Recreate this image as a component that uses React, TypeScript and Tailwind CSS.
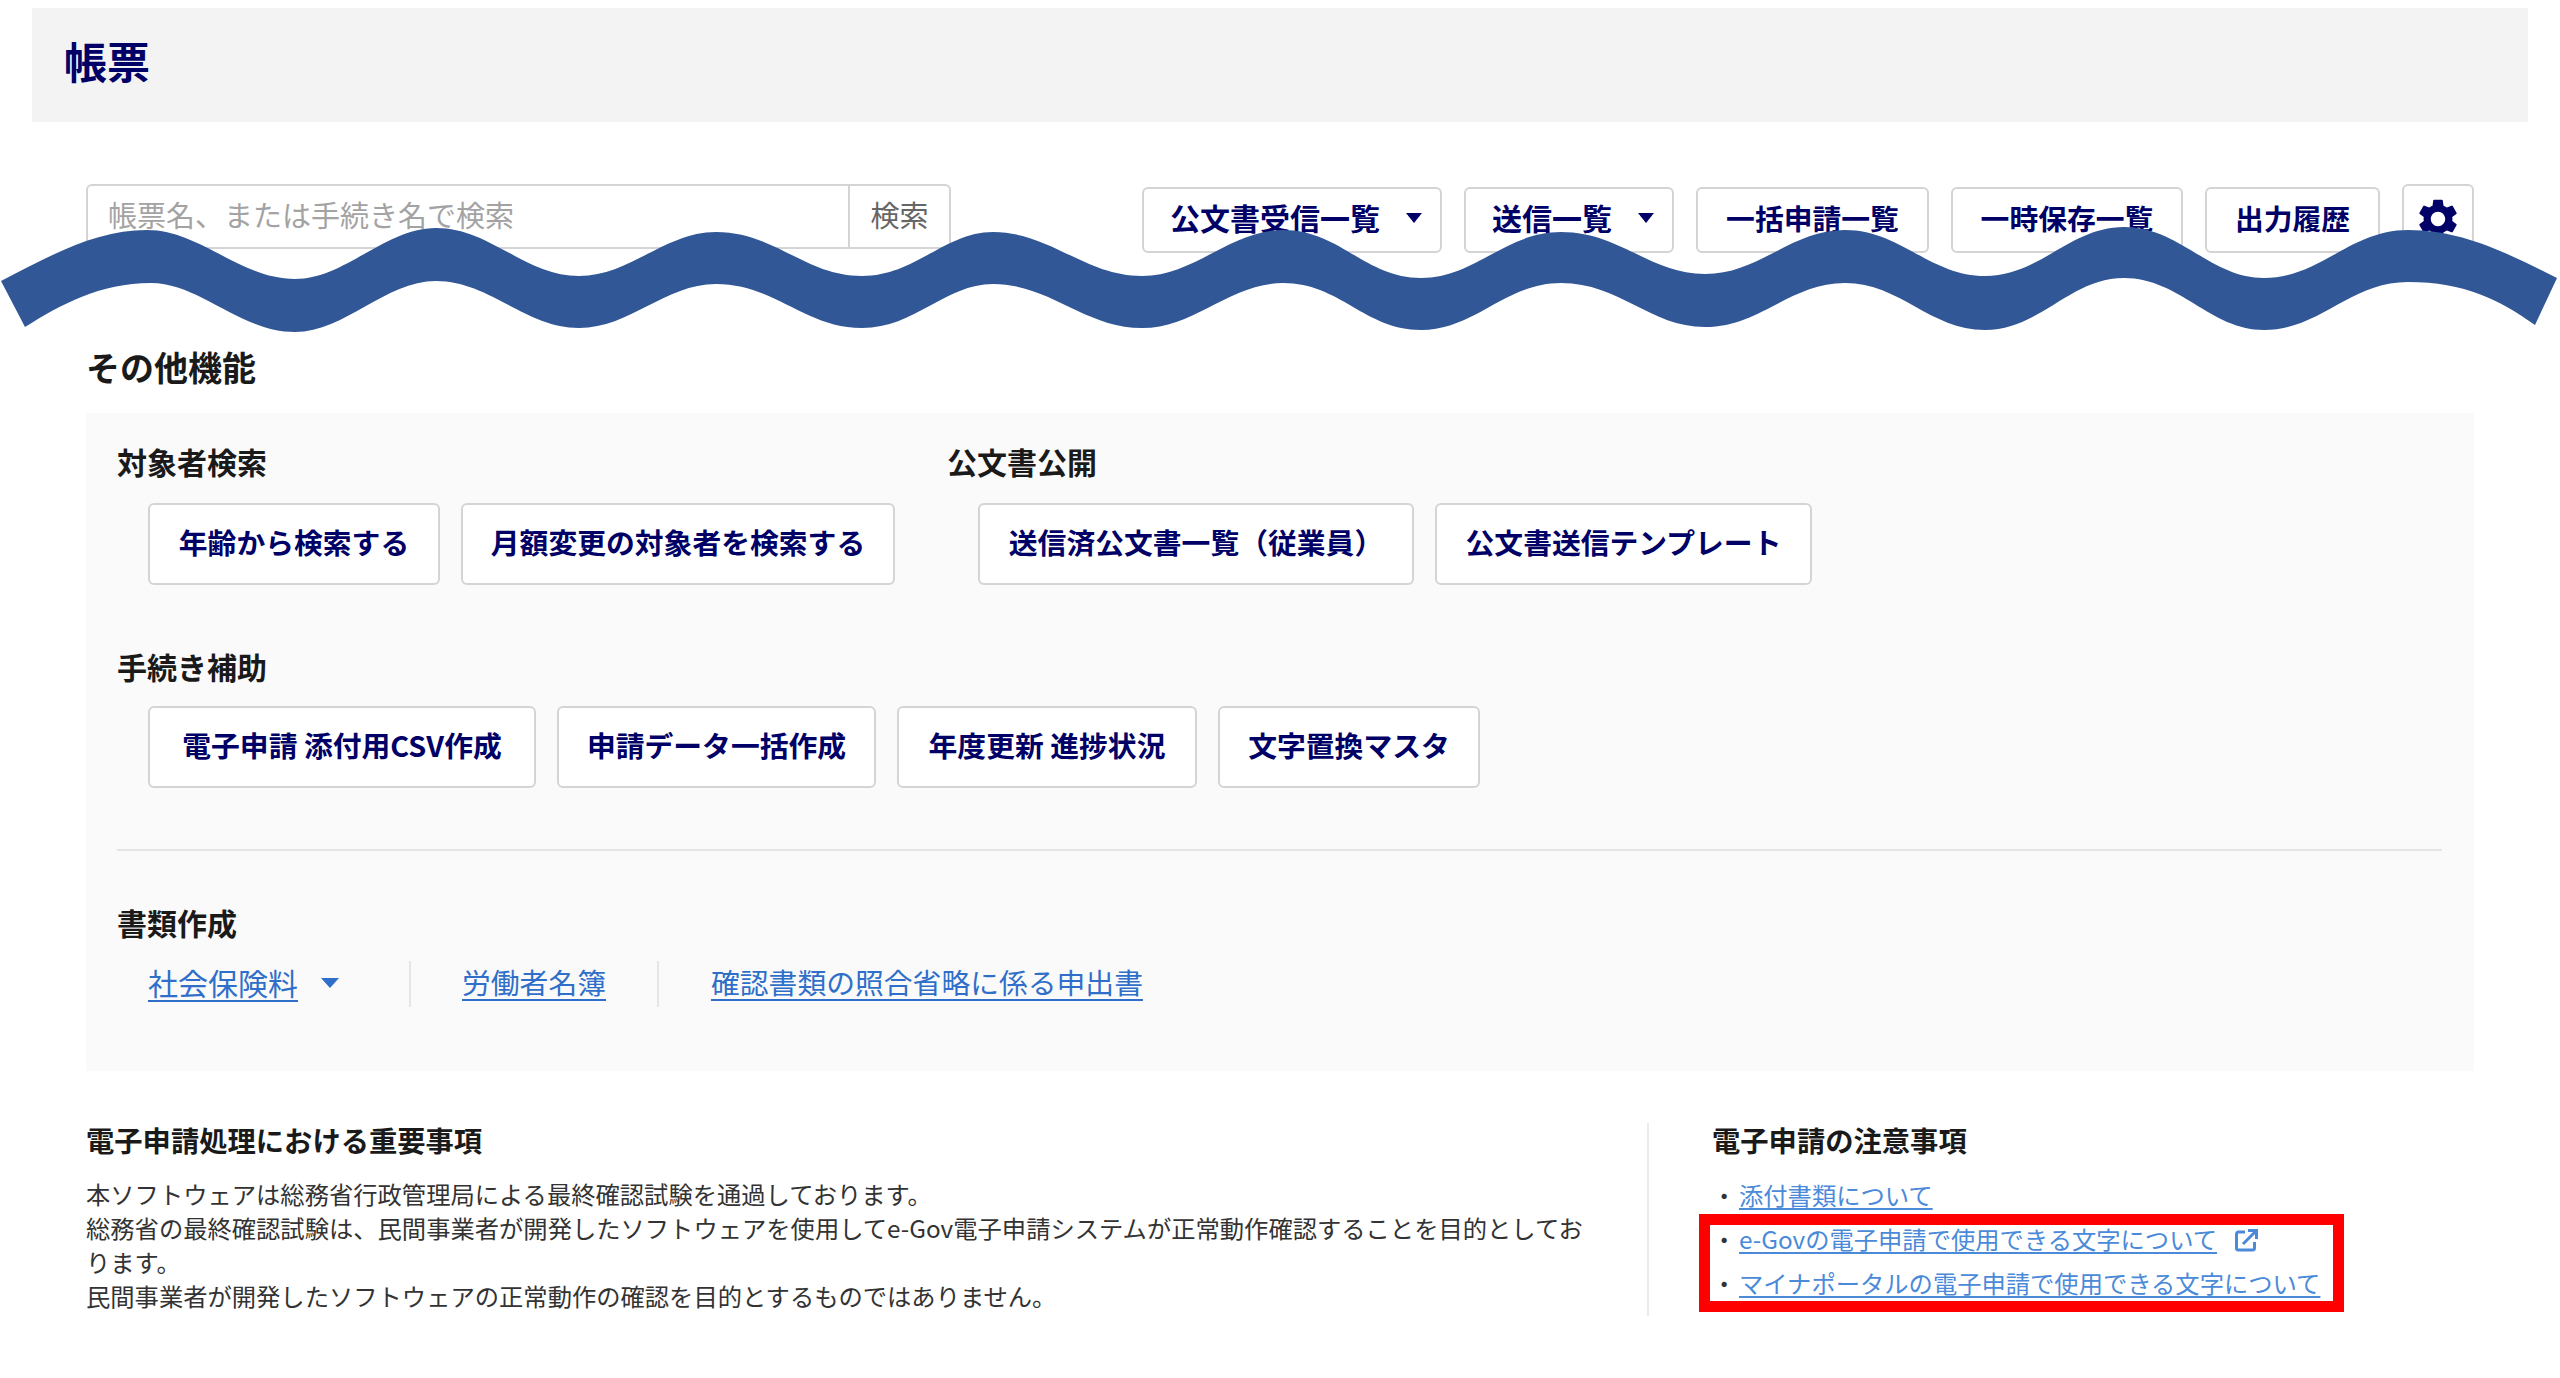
import React from "react";
import { MdSettings } from "react-icons/md";

const navy = "text-[#000066]";

function Btn({ children, className = "" }: { children: React.ReactNode; className?: string }) {
  return (
    <button className={`flex h-[82px] items-center justify-center rounded-[6px] border-2 border-[#d4d4d4] bg-white pb-[5px] text-[28.8px] font-bold ${navy} ${className}`}>
      {children}
    </button>
  );
}

function TopBtn({ children, w, caret }: { children: React.ReactNode; w: string; caret?: boolean }) {
  return (
    <button className={`flex h-[66px] items-center justify-center gap-[26px] rounded-[6px] border-2 border-[#d4d4d4] bg-white font-bold ${caret ? "pl-[8px] text-[30px]" : "text-[28.8px]"} ${navy} ${w}`}>
      <span className="pb-[5px]">{children}</span>
      {caret && <span className="mt-[-4px] h-0 w-0 border-x-[8px] border-t-[10px] border-x-transparent border-t-[#000066]" />}
    </button>
  );
}

function H({ children, className = "" }: { children: React.ReactNode; className?: string }) {
  return <h3 className={`pb-[2px] text-[30px] leading-[38px] font-bold text-[#1a1a1a] ${className}`}>{children}</h3>;
}

const wavePath =
  "M1 281 C60 250 100 230 147 230 C200 230 240 279 295 279 C345 279 385 228 436 228 C490 228 525 276 579 276 C630 276 665 232 716 232 C775 232 805 276 862 276 C915 276 945 232 993 232 C1050 232 1085 276 1142 276 C1195 276 1230 230 1283 230 C1340 230 1365 278 1421 278 C1475 278 1505 232 1561 232 C1620 232 1650 274 1705 274 C1760 274 1790 230 1845 230 C1900 230 1930 276 1985 276 C2040 276 2070 227 2124 227 C2180 227 2210 278 2264 278 C2320 278 2350 230 2408 230 C2465 230 2510 255 2557 278 L2535 325 C2500 300 2465 282 2408 282 C2350 282 2320 330 2264 330 C2210 330 2180 278 2124 278 C2070 278 2040 330 1985 330 C1930 330 1900 283 1845 283 C1790 283 1760 327 1705 327 C1650 327 1620 283 1561 283 C1505 283 1475 330 1421 330 C1365 330 1340 283 1283 283 C1230 283 1195 328 1142 328 C1085 328 1050 284 993 284 C945 284 915 328 862 328 C805 328 775 284 716 284 C665 284 630 328 579 328 C525 328 490 281 436 281 C385 281 345 332 295 332 C240 332 200 283 151 283 C100 283 60 305 25 327 Z";

export default function App() {
  return (
    <div className="relative h-[1378px] w-[2560px] overflow-hidden bg-white pt-2 font-['Noto_Sans_CJK_JP','Noto_Sans',sans-serif]">
      <header className="mx-8 flex h-[114px] items-center bg-[#f3f3f3] pb-[10px] pl-[32px]">
        <h1 className={`text-[43px] font-bold ${navy}`}>帳票</h1>
      </header>

      <main className="px-[86px]">
        <div className="mt-[62px] flex h-[69px] items-start justify-between">
          <div className="flex h-[65px] w-[865px] overflow-hidden rounded-[6px] border-2 border-[#d4d4d4] bg-white text-[29px]">
            <div className="flex flex-1 items-center pb-[3px] pl-[20px] text-[#a3a3a3]">帳票名、または手続き名で検索</div>
            <div className="flex w-[101px] items-center justify-center border-l-2 border-[#d4d4d4] pb-[3px] text-[#666666]">検索</div>
          </div>
          <div className="flex items-start gap-[22px]">
            <div className="mt-[3px] flex gap-[22px]">
              <TopBtn w="w-[300px]" caret>公文書受信一覧</TopBtn>
              <TopBtn w="w-[210px]" caret>送信一覧</TopBtn>
              <TopBtn w="w-[233px]">一括申請一覧</TopBtn>
              <TopBtn w="w-[232px]">一時保存一覧</TopBtn>
              <TopBtn w="w-[175px]">出力履歴</TopBtn>
            </div>
            <button className="flex h-[69px] w-[72px] items-center justify-center rounded-[6px] border-2 border-[#d4d4d4] bg-white">
              <MdSettings className="h-[48px] w-[48px] text-[#000066]" />
            </button>
          </div>
        </div>

        <h2 className="mt-[95px] pb-[2px] text-[34px] leading-[38px] font-bold text-[#1a1a1a]">その他機能</h2>

        <section className="mt-[25px] h-[658px] bg-[#fafafa] pt-[29px] pr-[32px] pl-[31px]">
          <div className="flex">
            <div className="w-[830px]">
              <H>対象者検索</H>
              <div className="mt-[21px] ml-[31px] flex gap-[21px]">
                <Btn className="w-[292px]">年齢から検索する</Btn>
                <Btn className="w-[434px]">月額変更の対象者を検索する</Btn>
              </div>
            </div>
            <div>
              <H>公文書公開</H>
              <div className="mt-[21px] ml-[31px] flex gap-[21px]">
                <Btn className="w-[436px]">送信済公文書一覧（従業員）</Btn>
                <Btn className="w-[377px]">公文書送信テンプレート</Btn>
              </div>
            </div>
          </div>

          <H className="mt-[62px]">手続き補助</H>
          <div className="mt-[19px] ml-[31px] flex gap-[21px]">
            <Btn className="w-[388px]">電子申請 添付用CSV作成</Btn>
            <Btn className="w-[319px]">申請データ一括作成</Btn>
            <Btn className="w-[300px]">年度更新 進捗状況</Btn>
            <Btn className="w-[262px]">文字置換マスタ</Btn>
          </div>

          <div className="mt-[61px] h-[2px] bg-[#e5e5e5]" />

          <H className="mt-[52px]">書類作成</H>
          <div className="mt-[18px] ml-[31px] flex h-[46px] items-center text-[28.8px] text-[#2f6fc9]">
            <a className="pb-[4px] text-[30px] underline decoration-2 underline-offset-[5px]">社会保険料</a>
            <span className="mt-[-3px] ml-[23px] h-0 w-0 border-x-[9px] border-t-[10px] border-x-transparent border-t-[#2f6fc9]" />
            <span className="ml-[70px] h-full w-[2px] bg-[#e5e5e5]" />
            <a className="ml-[51px] pb-[4px] underline decoration-2 underline-offset-[5px]">労働者名簿</a>
            <span className="ml-[51px] h-full w-[2px] bg-[#e5e5e5]" />
            <a className="ml-[52px] pb-[4px] underline decoration-2 underline-offset-[5px]">確認書類の照合省略に係る申出書</a>
          </div>
        </section>

        <div className="mt-[52px] flex">
          <div className="h-[193px] w-[1563px] border-r-2 border-[#ebebeb]">
            <h3 className="text-[28.3px] leading-[33px] font-bold text-[#1a1a1a]">電子申請処理における重要事項</h3>
            <p className="mt-[21px] w-[1510px] text-[24.3px] leading-[34px] text-[#333333]">
              本ソフトウェアは総務省行政管理局による最終確認試験を通過しております。
              <br />
              総務省の最終確認試験は、民間事業者が開発したソフトウェアを使用してe-Gov電子申請システムが正常動作確認することを目的としております。
              <br />
              民間事業者が開発したソフトウェアの正常動作の確認を目的とするものではありません。
            </p>
          </div>
          <div className="pl-[63px]">
            <h3 className="text-[28.3px] leading-[33px] font-bold text-[#1a1a1a]">電子申請の注意事項</h3>
            <ul className="mt-[22px] flex flex-col gap-[10px] text-[24.3px] leading-[34px] text-[#4a8ad8]">
              <li className="flex">
                <span className="w-[27px] text-[#333333]">・</span>
                <a className="underline underline-offset-[3px]">添付書類について</a>
              </li>
              <li className="flex items-center">
                <span className="w-[27px] text-[#333333]">・</span>
                <a className="underline underline-offset-[3px]">e-Govの電子申請で使用できる文字について</a>
                <svg className="mt-[2px] ml-[18px] h-[23px] w-[23px]" viewBox="0 0 23 23" fill="none" stroke="#4a8ad8" strokeWidth="3">
                  <path d="M10 3H3.5a2 2 0 0 0-2 2v14a2 2 0 0 0 2 2h14a2 2 0 0 0 2-2v-6" />
                  <path d="M8 15L21 2M13 1.5h8.5V10" />
                </svg>
              </li>
              <li className="flex">
                <span className="w-[27px] text-[#333333]">・</span>
                <a className="underline underline-offset-[3px]">マイナポータルの電子申請で使用できる文字について</a>
              </li>
            </ul>
          </div>
        </div>
      </main>

      <svg className="pointer-events-none absolute top-0 left-0" width="2560" height="400" viewBox="0 0 2560 400">
        <path d={wavePath} fill="#315797" />
      </svg>
      <div className="pointer-events-none absolute top-[1214px] left-[1699px] h-[98px] w-[645px] border-[11px] border-[#ff0000]" />
    </div>
  );
}
